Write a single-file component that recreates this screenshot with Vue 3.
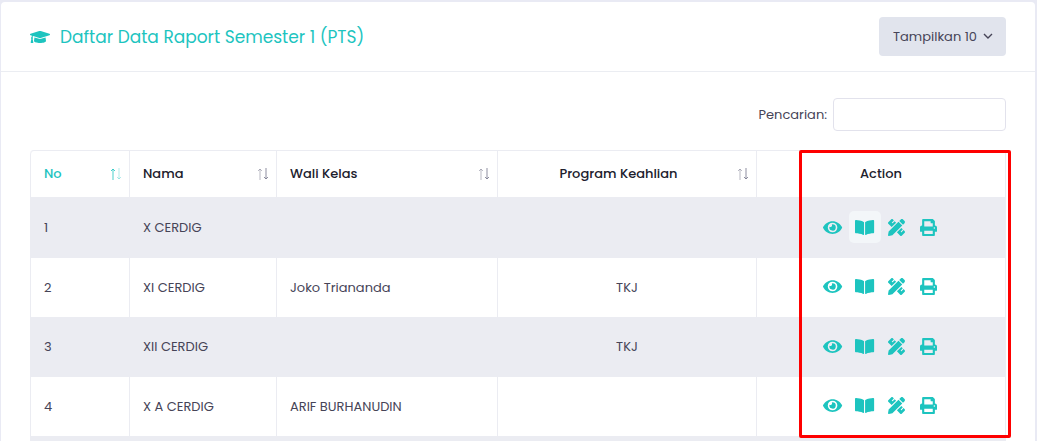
<script setup>
import { ref } from 'vue'

const pageSize = ref('10')
const search = ref('')

const columns = [
  { label: 'No', active: true },
  { label: 'Nama' },
  { label: 'Wali Kelas' },
  { label: 'Program Keahlian', centered: true },
]

const rows = [
  { no: '1', nama: 'X CERDIG', wali: '', program: '' },
  { no: '2', nama: 'XI CERDIG', wali: 'Joko Triananda', program: 'TKJ' },
  { no: '3', nama: 'XII CERDIG', wali: '', program: 'TKJ' },
  { no: '4', nama: 'X A CERDIG', wali: 'ARIF BURHANUDIN', program: '' },
]

const actions = [
  {
    name: 'Lihat',
    box: '0 0 576 512',
    path: 'M572.52 241.4C518.29 135.59 410.93 64 288 64S57.68 135.64 3.48 241.41a32.35 32.35 0 0 0 0 29.19C57.71 376.41 165.07 448 288 448s230.32-71.64 284.52-177.41a32.35 32.35 0 0 0 0-29.19zM288 400a144 144 0 1 1 144-144 143.93 143.93 0 0 1-144 144zm0-240a95.31 95.31 0 0 0-25.31 3.79 47.85 47.85 0 0 1-66.9 66.9A95.78 95.78 0 1 0 288 160z',
  },
  {
    name: 'Buka raport',
    box: '0 0 576 512',
    path: 'M542.22 32.05c-54.8 3.11-163.72 14.43-230.96 55.59-4.64 2.84-7.27 7.89-7.27 13.17v363.87c0 11.55 12.63 18.85 23.28 13.49 69.18-34.82 169.23-44.32 218.7-46.92 16.89-.89 30.02-14.43 30.02-30.66V62.75c.01-17.71-15.35-31.74-33.77-30.7zM264.73 87.64C197.5 46.48 88.58 35.17 33.78 32.05 15.36 31.01 0 45.04 0 62.75V400.6c0 16.24 13.13 29.78 30.02 30.66 49.49 2.6 149.59 12.11 218.77 46.95 10.62 5.35 23.21-1.94 23.21-13.46V100.63c0-5.29-2.62-10.14-7.27-12.99z',
  },
  {
    name: 'Edit',
    box: '0 0 512 512',
    path: 'M109.46 244.04l134.58-134.56-44.12-44.12-61.68 61.68a7.919 7.919 0 0 1-11.21 0l-11.21-11.21c-3.1-3.1-3.1-8.12 0-11.21l61.68-61.68-33.64-33.65C131.47-3.1 111.39-3.1 99 9.29L9.29 99c-12.38 12.39-12.39 32.47 0 44.86l100.17 100.18zm388.47-116.8c18.76-18.76 18.75-49.17 0-67.93l-45.25-45.25c-18.76-18.76-49.18-18.76-67.95 0l-46.02 46.01 113.2 113.2 46.02-46.03zM316.08 82.71l-297 296.96L.32 487.11c-2.53 14.49 10.09 27.11 24.59 24.56l107.45-18.84L429.28 195.9 316.08 82.71zm186.63 285.43l-33.64-33.64-61.68 61.68c-3.1 3.1-8.12 3.1-11.21 0l-11.21-11.21c-3.09-3.1-3.09-8.12 0-11.21l61.68-61.68-44.14-44.14L267.93 402.5l100.21 100.2c12.39 12.39 32.47 12.39 44.86 0l89.71-89.7c12.39-12.39 12.39-32.47 0-44.86z',
  },
  {
    name: 'Cetak',
    box: '0 0 512 512',
    path: 'M448 192V77.25c0-8.49-3.37-16.62-9.37-22.63L393.37 9.37c-6-6-14.14-9.37-22.63-9.37H96C78.33 0 64 14.33 64 32v160c-35.35 0-64 28.65-64 64v112c0 8.84 7.16 16 16 16h48v96c0 17.67 14.33 32 32 32h320c17.67 0 32-14.33 32-32v-96h48c8.84 0 16-7.16 16-16V256c0-35.35-28.65-64-64-64zm-64 256H128v-96h256v96zm0-224H128V64h192v48c0 8.84 7.16 16 16 16h48v96zm48 72c-13.25 0-24-10.75-24-24 0-13.26 10.75-24 24-24s24 10.74 24 24c0 13.25-10.75 24-24 24z',
  },
]
</script>

<template>
  <div class="page">
    <main class="card">
      <header class="card-head">
        <svg class="cap" viewBox="0 0 640 512" aria-hidden="true">
          <path d="M622.34 153.2L343.4 67.5c-15.2-4.67-31.6-4.67-46.79 0L17.66 153.2c-23.54 7.23-23.54 38.36 0 45.59l48.63 14.94c-10.67 13.19-17.23 29.28-17.88 46.9C38.78 266.15 32 276.11 32 288c0 10.78 5.68 19.85 13.86 25.65L20.33 428.53C18.11 438.52 25.71 448 35.94 448h56.11c10.24 0 17.84-9.48 15.62-19.47L82.14 313.65C90.32 307.85 96 298.78 96 288c0-11.57-6.47-21.25-15.66-26.87.76-15.02 8.44-28.3 20.69-36.72L296.6 284.5c9.06 2.78 26.44 6.25 46.79 0l278.95-85.7c23.55-7.24 23.55-38.36 0-45.6zM352.79 315.09c-28.53 8.76-52.84 3.92-65.59 0l-145.02-44.55L128 384c0 35.35 85.96 64 192 64s192-28.65 192-64l-14.18-113.47-145.03 44.56z" />
        </svg>
        <h1 class="title">Daftar Data Raport Semester 1 (PTS)</h1>
        <div class="size-picker">
          <select v-model="pageSize" aria-label="Jumlah data">
            <option value="10">Tampilkan 10</option>
          </select>
          <svg class="chevron" viewBox="0 0 10 6" aria-hidden="true"><path d="M1 1l4 4 4-4" /></svg>
        </div>
      </header>

      <div class="card-body">
        <div class="search">
          <label for="search">Pencarian:</label>
          <input id="search" v-model="search" type="search" />
        </div>

        <div class="table-wrap">
          <table>
            <colgroup>
              <col class="c-no" />
              <col class="c-nama" />
              <col class="c-wali" />
              <col class="c-program" />
              <col />
            </colgroup>
            <thead>
              <tr>
                <th v-for="c in columns" :key="c.label" :class="{ active: c.active, centered: c.centered }">
                  <div class="th-inner">
                    <span class="th-label">{{ c.label }}</span>
                    <svg class="sort" viewBox="0 0 12 12" aria-hidden="true">
                      <path class="up" d="M3 12V1M1 3l2-2 2 2" />
                      <path class="down" d="M9 0v11M7 9l2 2 2-2" />
                    </svg>
                  </div>
                </th>
                <th class="centered">Action</th>
              </tr>
            </thead>
            <tbody>
              <tr v-for="(r, i) in rows" :key="r.no">
                <td>{{ r.no }}</td>
                <td>{{ r.nama }}</td>
                <td>{{ r.wali }}</td>
                <td class="centered">{{ r.program }}</td>
                <td>
                  <div class="actions">
                    <button
                      v-for="(a, j) in actions"
                      :key="a.name"
                      type="button"
                      :class="{ hovered: i === 0 && j === 1 }"
                      :aria-label="a.name"
                    >
                      <svg :viewBox="a.box" aria-hidden="true"><path :d="a.path" /></svg>
                    </button>
                  </div>
                </td>
              </tr>
              <tr><td colspan="5"></td></tr>
            </tbody>
          </table>
          <div class="highlight"></div>
        </div>
      </div>
    </main>
  </div>
</template>

<style>
body {
  background: #e9eaf4;
}
</style>

<style scoped>
.page {
  box-sizing: border-box;
  height: 100vh;
  overflow: hidden;
  padding: 2px 2px 0 1px;
  background: #e9eaf4;
  font-family: Poppins, Inter, "Open Sans", sans-serif;
  font-size: 13px;
  line-height: 20px;
  color: #464457;
}
.card {
  background: #fff;
  border-radius: 4px 4px 0 0;
}
.card-head {
  display: flex;
  align-items: center;
  box-sizing: border-box;
  min-height: 70px;
  padding: 0 29px;
  border-bottom: 1px solid #ebedf2;
}
.cap {
  width: 20px;
  height: 16px;
  fill: #1dc4bf;
}
.title {
  flex: 1;
  margin: 0 0 0 10px;
  font-size: 17px;
  line-height: 24px;
  font-weight: 400;
  color: #1dc4bf;
}
.size-picker {
  position: relative;
}
.size-picker select {
  appearance: none;
  display: block;
  width: 127px;
  height: 39px;
  padding: 0 14px;
  border: 0;
  border-radius: 4px;
  background: #e1e4ed;
  color: #464457;
  font: inherit;
}
.chevron {
  position: absolute;
  right: 13px;
  top: 16px;
  width: 10px;
  height: 6px;
  fill: none;
  stroke: #464457;
  stroke-width: 1.4;
  pointer-events: none;
}
.card-body {
  padding: 26px 29px;
}
.search {
  display: flex;
  justify-content: flex-end;
  align-items: center;
  gap: 6px;
  margin-bottom: 19px;
}
.search input {
  box-sizing: border-box;
  width: 173px;
  height: 33px;
  padding: 0 10px;
  border: 1px solid #e2e2ec;
  border-radius: 4px;
  background: #fff;
  font: inherit;
}
.table-wrap {
  position: relative;
}
table {
  width: 100%;
  table-layout: fixed;
  border-collapse: separate;
  border-spacing: 0;
  border: solid #ebecf2;
  border-width: 1px 1px 0 0;
  border-radius: 4px 4px 0 0;
}
.c-no {
  width: 10.15%;
}
.c-nama {
  width: 15.08%;
}
.c-wali {
  width: 22.67%;
}
.c-program {
  width: 26.56%;
}
th,
td {
  box-sizing: border-box;
  padding: 0 13px;
  border-left: 1px solid #ebecf2;
  text-align: left;
}
th {
  height: 47px;
  border-bottom: 1px solid #ebecf2;
  font-weight: 500;
  color: #20202c;
}
th:first-child {
  border-top-left-radius: 4px;
}
td {
  height: 59px;
}
tbody tr:nth-child(odd) td {
  height: 60px;
  background: #ebecf2;
}
.centered {
  text-align: center;
}
.th-inner {
  display: flex;
  align-items: center;
  gap: 11px;
  margin-right: -6px;
}
.th-label {
  flex: 1;
}
.sort {
  width: 12px;
  height: 12px;
  fill: none;
  stroke: #74748a;
}
.up {
  opacity: 0.5;
}
.down {
  opacity: 0.8;
}
th.active {
  color: #1dc4bf;
}
.active .sort {
  stroke: #1dc4bf;
}
.active .up {
  opacity: 0.8;
}
.active .down {
  opacity: 0.35;
}
.actions {
  display: flex;
  justify-content: center;
  padding-bottom: 2px;
}
.actions button {
  display: flex;
  align-items: center;
  justify-content: center;
  width: 32px;
  height: 32px;
  padding: 0;
  border: 0;
  border-radius: 5px;
  background: none;
}
.actions .hovered {
  background: #f3f6f9;
}
.actions svg {
  height: 17px;
  fill: #1dc4bf;
}
.highlight {
  position: absolute;
  top: 0;
  right: -5px;
  box-sizing: border-box;
  width: 212px;
  height: 288px;
  border: 3px solid #fe0000;
  border-radius: 2px;
  pointer-events: none;
}
</style>
